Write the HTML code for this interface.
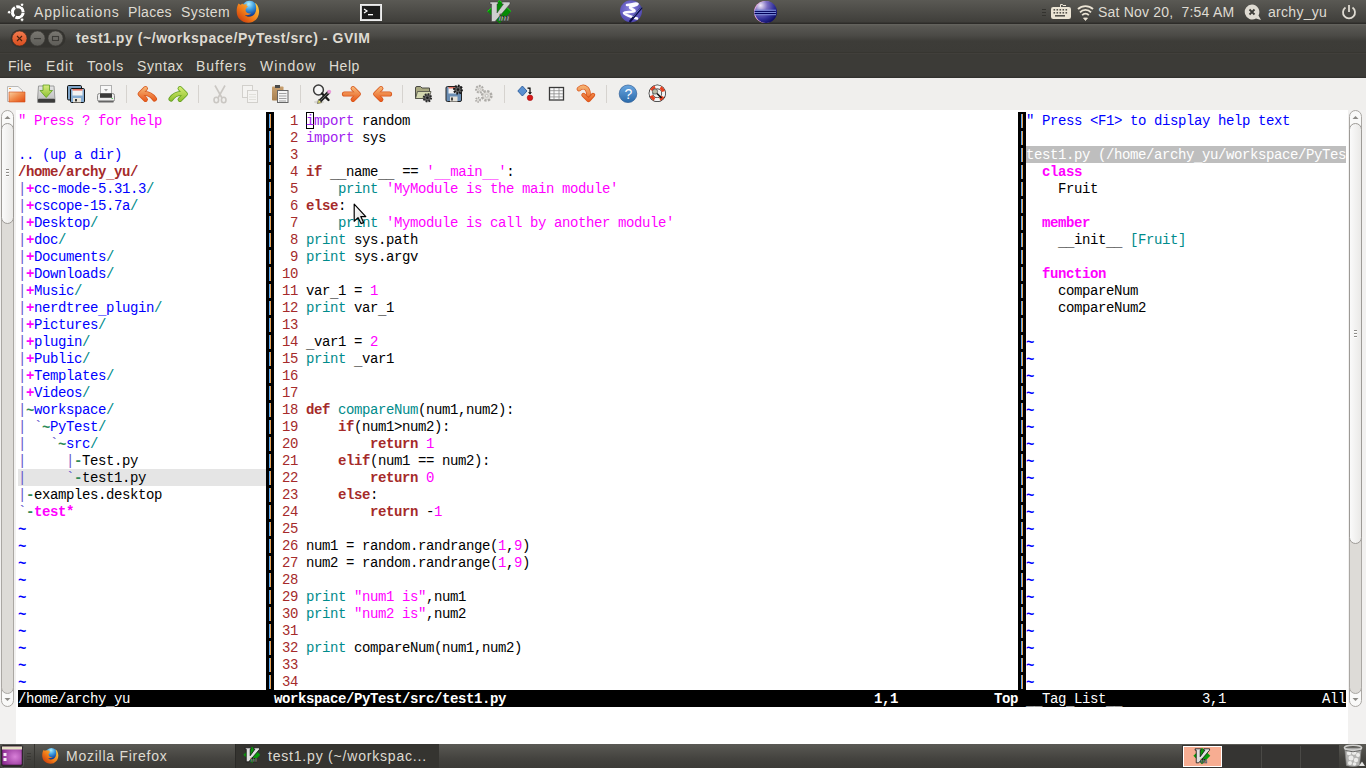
<!DOCTYPE html>
<html><head><meta charset="utf-8">
<style>
html,body{margin:0;padding:0;width:1366px;height:768px;overflow:hidden;background:#f2f1f0;}
body{position:relative;font-family:"Liberation Sans",sans-serif;}
.abs{position:absolute;}
/* top panel */
#toppanel{position:absolute;left:0;top:0;width:1366px;height:24px;background:linear-gradient(#5a5954 0px,#403f3b 21.5px,#2d2c29 23.5px);}
.pt{position:absolute;top:4px;font-size:14px;color:#dfdbd2;white-space:pre;line-height:17px;}
/* title bar */
#titlebar{position:absolute;left:0;top:24px;width:1366px;height:28px;background:linear-gradient(#666560 0px,#5a5954 2px,#4a4945 12px,#3d3c38 17px,#3c3b37);}
#title{position:absolute;left:76px;top:30px;font-size:14px;font-weight:bold;color:#dfdbd2;white-space:pre;letter-spacing:0.55px;line-height:17px;}
#menubar{position:absolute;left:0;top:52px;width:1366px;height:26px;background:linear-gradient(#373631 0px,#373631 1px,#413f3b 1px,#413f3b 2px,#3c3b37 2px,#3c3b37 24px,#2f2e2b 26px);}
.mt{position:absolute;top:58px;font-size:14px;color:#dfdbd2;white-space:pre;line-height:17px;}
#toolbar{position:absolute;left:0;top:78px;width:1366px;height:32px;background:#f0efed;}
.tsep{position:absolute;top:85px;width:1px;height:18px;background:#d6d3cf;}
/* editor */
#white{position:absolute;left:16px;top:110px;width:1332px;height:634px;background:#fff;}
.ln{position:absolute;font-family:"Liberation Mono",monospace;font-size:14px;letter-spacing:-0.4013px;line-height:17px;white-space:pre;height:17px;}
.mg{color:#ff00ff}.bl{color:#0000ff}.br{color:#a52a2a}.sb{color:#6a5acd}.dc{color:#008b8b}.sg{color:#2e8b57}.pp{color:#a020f0}.bk{color:#000}
.b{font-weight:bold}.us{position:relative;top:2px}.tl{position:relative;top:1px}.wh{color:#fff}
.hdr{color:#fff}
.sep{position:absolute;width:8px;height:17px;background:#000;}
.sep:after{content:"";position:absolute;left:3px;top:2px;width:2px;height:14px;background:linear-gradient(90deg,#5aa9f0 50%,#e8a050 50%);}
/* scrollbars */
.sbar{position:absolute;width:13px;border:1px solid #a8a5a0;border-radius:7px;background:#dcdad5;box-sizing:border-box;}
.sthumb{position:absolute;width:13px;border:1px solid #9a9893;border-radius:7px;background:linear-gradient(90deg,#fdfdfd,#ecebe9);box-sizing:border-box;}
/* bottom panel */
#botpanel{position:absolute;left:0;top:744px;width:1366px;height:24px;background:linear-gradient(#5a5954,#44433f 60%,#3c3b37);}
.bt{position:absolute;top:748px;font-size:14px;color:#dfdbd2;white-space:pre;line-height:17px;}
</style></head><body>

<div id="toppanel"></div>
<!-- ubuntu logo -->
<svg class="abs" style="left:4px;top:0px" width="26" height="24" viewBox="0 0 26 24">
 <circle cx="13.75" cy="12.2" r="5.4" fill="none" stroke="#fff" stroke-width="3.1" stroke-dasharray="10.01 1.3" stroke-dashoffset="10.66"/>
 <circle cx="5.15" cy="12.20" r="1.75" fill="#fff" stroke="#46453f" stroke-width="0.8"/>
 <circle cx="18.05" cy="4.75" r="1.75" fill="#fff" stroke="#46453f" stroke-width="0.8"/>
 <circle cx="18.05" cy="19.65" r="1.75" fill="#fff" stroke="#46453f" stroke-width="0.8"/>
</svg>
<div class="pt" style="left:34px;letter-spacing:0.85px">Applications</div>
<div class="pt" style="left:128px;letter-spacing:0.3px">Places</div>
<div class="pt" style="left:181px;letter-spacing:0.4px">System</div>
<!-- firefox -->
<svg class="abs" style="left:235px;top:0px" width="25" height="24" viewBox="0 0 25 24">
 <defs><radialGradient id="ffg" cx="0.45" cy="0.2" r="0.8"><stop offset="0" stop-color="#aef0ff"/><stop offset="0.45" stop-color="#3a9ae0"/><stop offset="1" stop-color="#0a2e88"/></radialGradient>
 <linearGradient id="ffo" x1="0" y1="1" x2="1" y2="0"><stop offset="0" stop-color="#c02a08"/><stop offset="0.45" stop-color="#f07a18"/><stop offset="1" stop-color="#ffd848"/></linearGradient></defs>
 <circle cx="14.5" cy="8.8" r="8" fill="url(#ffg)"/>
 <path d="M3.5 3.5 C1 8 1 15 4 18.5 C7.5 22.5 13 23.5 17.5 22 C22 20 24.5 15.5 24 10.5 C23.5 6 21.5 3.5 20 3 C22 7 21.5 13 18 15.5 C15 17.5 11.5 17 10 15 C13 15.5 15.5 14.5 16 13.5 C13 14 10.5 12.5 10.5 10 C10.5 8.5 12.5 7 13 6 C11.5 6.5 11 5 12 3.5 C10 5 8.5 4.5 7 3.5 C6.5 5 5 5 3.5 3.5 Z" fill="url(#ffo)"/>
</svg>
<!-- terminal -->
<svg class="abs" style="left:360px;top:4px" width="22" height="17" viewBox="0 0 22 17">
 <rect x="0.5" y="0.5" width="21" height="16" fill="#d8d8d8" stroke="#eee"/>
 <rect x="2" y="2" width="18" height="13" fill="#1c1c1c"/>
 <path d="M4 5 L7 7 L4 9" stroke="#fff" stroke-width="1.2" fill="none"/>
 <rect x="8" y="10" width="5" height="1.3" fill="#fff"/>
</svg>
<!-- vim -->
<svg class="abs" style="left:484px;top:0px" width="32" height="24" viewBox="0 0 32 24">
 <path d="M15.5 0.5 L27 11.5 L15.5 23.5 L3.5 11.5 Z" fill="#068a06"/>
 <path d="M3.5 11.5 L15.5 0.5 L27 11.5" fill="none" stroke="#10e010" stroke-width="1"/>
 <path d="M6 2 H14 V4 H13 V13 L19.5 4 H18 V2 H26 V4 L11 21.5 H7.5 V4 H6 Z" fill="#cfcfcf" stroke="#3a3a3a" stroke-width="0.5"/>
 <text x="14.5" y="21" font-family="Liberation Sans" font-size="9.5" font-style="italic" font-weight="bold" fill="#e4e4e4" stroke="#222" stroke-width="0.5" letter-spacing="-0.3">im</text>
</svg>
<!-- emacs -->
<svg class="abs" style="left:619px;top:0px" width="25" height="24" viewBox="0 0 25 24">
 <defs><radialGradient id="emg" cx="0.45" cy="0.4" r="0.6"><stop offset="0" stop-color="#8a82dc"/><stop offset="1" stop-color="#5048b0"/></radialGradient></defs>
 <ellipse cx="12" cy="22.5" rx="8" ry="1.5" fill="#2c2b28" opacity="0.6"/>
 <circle cx="12" cy="11.25" r="11" fill="url(#emg)"/>
 <path d="M8 5 C12 5 17 2.5 18.5 4 C18 6 11 6 11 7.5 C11 9 16 9.5 15.5 11 C14.5 12.5 5.5 11.5 5 13 C5 15 12 16.5 18 18.5" fill="none" stroke="#fbfaff" stroke-width="2.6" stroke-linecap="round" stroke-linejoin="round"/>
 <path d="M22.8 7.3 L10.6 22" stroke="#0c0c48" stroke-width="2.2"/>
 <path d="M22.5 6.8 L14 17" stroke="#8aa0f0" stroke-width="0.7"/>
</svg>
<!-- eclipse -->
<svg class="abs" style="left:753px;top:0px" width="24" height="24" viewBox="0 0 24 24">
 <defs><radialGradient id="ecg" cx="0.25" cy="0.2" r="0.9"><stop offset="0" stop-color="#f0e8f8"/><stop offset="0.35" stop-color="#7a6cc0"/><stop offset="0.7" stop-color="#30309a"/><stop offset="1" stop-color="#0a0a60"/></radialGradient></defs>
 <circle cx="12" cy="12" r="11" fill="#f0a8e0"/>
 <circle cx="13" cy="12" r="11" fill="url(#ecg)"/>
 <g fill="#000058"><rect x="1.5" y="10.8" width="21" height="1.3"/><rect x="1.5" y="13" width="21" height="1.3"/></g>
 <g fill="#7a8ad8"><rect x="1.5" y="9.7" width="21.5" height="1.1"/><rect x="1.5" y="11.9" width="21.5" height="1.1"/><rect x="1.5" y="14.1" width="21.5" height="1.1"/></g>
</svg>
<!-- right side indicators -->
<div class="abs" style="left:1042px;top:9px;width:4px;height:8px;background:repeating-linear-gradient(#34332f 0 1px,transparent 1px 3px);"></div>
<svg class="abs" style="left:1050px;top:3px" width="22" height="17" viewBox="0 0 22 17">
 <path d="M10.5 4 V1.5 H12.5 L13 2.5 H16" fill="none" stroke="#ece5d5" stroke-width="1"/>
 <rect x="1" y="4" width="20" height="12" rx="2.2" fill="#ece5d5"/>
 <g fill="#55534d"><rect x="3.5" y="6" width="1.6" height="1.6"/><rect x="6.5" y="6" width="1.6" height="1.6"/><rect x="9.5" y="6" width="1.6" height="1.6"/><rect x="12.5" y="6" width="1.6" height="1.6"/><rect x="15.5" y="6" width="1.6" height="1.6"/>
 <rect x="3.5" y="9" width="1.6" height="1.6"/><rect x="6.5" y="9" width="1.6" height="1.6"/><rect x="9.5" y="9" width="1.6" height="1.6"/><rect x="12.5" y="9" width="1.6" height="1.6"/><rect x="15.5" y="9" width="1.6" height="1.6"/>
 <rect x="5" y="12" width="10" height="1.6"/></g>
</svg>
<svg class="abs" style="left:1077px;top:4px" width="17" height="17" viewBox="0 0 17 17">
 <g fill="none" stroke="#ece5d5" stroke-width="1.8"><path d="M1 5 A11 11 0 0 1 16 5"/><path d="M3 8.3 A7.5 7.5 0 0 1 14 8.3"/><path d="M5.2 11.3 A4.2 4.2 0 0 1 11.8 11.3"/></g>
 <path d="M6.5 14 H10.5 L8.5 16.5 Z" fill="#ece5d5" stroke="#ece5d5" stroke-width="0.8" stroke-linejoin="round"/>
</svg>
<div class="pt" style="left:1098px;letter-spacing:0.2px">Sat Nov 20,  7:54 AM</div>
<svg class="abs" style="left:1244px;top:4px" width="18" height="17" viewBox="0 0 18 17">
 <path d="M8 0.5 A7.5 7.5 0 1 0 12 14.5 L17 16 L14.5 11.5 A7.5 7.5 0 0 0 8 0.5Z" fill="#dfdbd2"/>
 <path d="M5.5 5.5 L10.5 10.5 M10.5 5.5 L5.5 10.5" stroke="#3c3b37" stroke-width="1.8"/>
</svg>
<div class="pt" style="left:1268px;letter-spacing:0.3px">archy_yu</div>
<svg class="abs" style="left:1341px;top:4px" width="16" height="16" viewBox="0 0 16 16">
 <path d="M4.5 3.5 A6 6 0 1 0 11.5 3.5" fill="none" stroke="#dfdbd2" stroke-width="1.8"/>
 <path d="M8 1 V8" stroke="#dfdbd2" stroke-width="1.8"/>
</svg>

<!-- title bar -->
<div id="titlebar"></div>
<svg class="abs" style="left:10px;top:29px" width="56" height="19" viewBox="0 0 56 19">
 <rect x="0.5" y="0.5" width="55" height="18" rx="9" fill="#34332f"/>
 <defs><linearGradient id="clg" x1="0" y1="0" x2="0" y2="1"><stop offset="0" stop-color="#f47b4f"/><stop offset="1" stop-color="#d84d1e"/></linearGradient>
 <linearGradient id="mng" x1="0" y1="0" x2="0" y2="1"><stop offset="0" stop-color="#7a7872"/><stop offset="1" stop-color="#5d5c57"/></linearGradient></defs>
 <circle cx="9.5" cy="9.5" r="7.5" fill="url(#clg)" stroke="#3a2a20" stroke-width="0.6"/>
 <path d="M7 7 L12 12 M12 7 L7 12" stroke="#4a2410" stroke-width="1.1"/>
 <circle cx="27.5" cy="9.5" r="7.5" fill="url(#mng)" stroke="#3a3936" stroke-width="0.6"/>
 <rect x="24" y="9" width="7" height="1.2" fill="#3c3b37"/>
 <circle cx="45.5" cy="9.5" r="7.5" fill="url(#mng)" stroke="#3a3936" stroke-width="0.6"/>
 <rect x="42.5" y="7.5" width="6" height="4" fill="none" stroke="#3c3b37" stroke-width="1.1"/>
</svg>
<div id="title">test1.py (~/workspace/PyTest/src) - GVIM</div>

<!-- menu bar -->
<div id="menubar"></div>
<div class="mt" style="left:8px;letter-spacing:0.3px">File</div>
<div class="mt" style="left:46px;letter-spacing:0.9px">Edit</div>
<div class="mt" style="left:87px;letter-spacing:0.9px">Tools</div>
<div class="mt" style="left:137px;letter-spacing:0.6px">Syntax</div>
<div class="mt" style="left:196px;letter-spacing:1.0px">Buffers</div>
<div class="mt" style="left:260px;letter-spacing:1.1px">Window</div>
<div class="mt" style="left:329px;letter-spacing:0.5px">Help</div>

<!-- toolbar -->
<div id="toolbar"></div>
<svg class="abs" style="left:0;top:78px" width="700" height="32" viewBox="0 78 700 32">
 <defs>
  <linearGradient id="gOr" gradientUnits="userSpaceOnUse" x1="0" y1="87" x2="0" y2="101"><stop offset="0" stop-color="#f6b878"/><stop offset="1" stop-color="#e85a1c"/></linearGradient>
  <linearGradient id="gOr2" gradientUnits="userSpaceOnUse" x1="0" y1="85" x2="0" y2="102"><stop offset="0" stop-color="#f6b878"/><stop offset="1" stop-color="#e85a1c"/></linearGradient>
  <linearGradient id="gGr2" gradientUnits="userSpaceOnUse" x1="0" y1="87" x2="0" y2="101"><stop offset="0" stop-color="#d4ec70"/><stop offset="1" stop-color="#90c030"/></linearGradient>
  <linearGradient id="gFold" x1="0" y1="0" x2="1" y2="1"><stop offset="0" stop-color="#f8d0a0"/><stop offset="0.5" stop-color="#f08848"/><stop offset="1" stop-color="#e24a12"/></linearGradient>
  <linearGradient id="gGr" x1="0" y1="0" x2="0" y2="1"><stop offset="0" stop-color="#d8ec80"/><stop offset="1" stop-color="#8cc030"/></linearGradient>
  <linearGradient id="gDrv" x1="0" y1="0" x2="0" y2="1"><stop offset="0" stop-color="#e6e6e6"/><stop offset="1" stop-color="#b6b6b6"/></linearGradient>
  <linearGradient id="gBlue" x1="0" y1="0" x2="0" y2="1"><stop offset="0" stop-color="#6aa6e0"/><stop offset="1" stop-color="#2a6aaa"/></linearGradient>
  <linearGradient id="gClip" x1="0" y1="0" x2="0" y2="1"><stop offset="0" stop-color="#c8a070"/><stop offset="1" stop-color="#a88050"/></linearGradient>
 </defs>
 <!-- open -->
 <path d="M7.5 86.5 H18 L22.5 90.5 V101.5 H7.5 Z" fill="#f6f6f6" stroke="#b9b9b9"/>
 <rect x="9" y="88" width="2" height="1" fill="#f0a040"/>
 <path d="M9 92 H25 V102 H9 Z" fill="url(#gFold)" stroke="#d04a18" stroke-width="0.6"/>
 <!-- save (drive) -->
 <path d="M38.5 86 H54 L55 100 V102.5 H37.5 V100 Z" fill="url(#gDrv)" stroke="#9a9a9a"/>
 <rect x="38" y="98.8" width="17" height="3.6" rx="1" fill="#3c3c3c"/>
 <path d="M43 85 H49.5 V90.5 H52.5 L46.2 97.5 L40 90.5 H43 Z" fill="url(#gGr)" stroke="#5e9e22" stroke-width="0.8"/>
 <!-- save all floppy -->
 <rect x="67.5" y="85.5" width="14" height="14.5" rx="1.2" fill="#7fa4c8" stroke="#111"/>
 <rect x="70.5" y="88.5" width="14" height="14" rx="1.2" fill="#86acd2" stroke="#111"/>
 <rect x="72.5" y="89" width="10" height="6.5" fill="#f2f2f2"/>
 <rect x="72.5" y="89" width="10" height="1.6" fill="#e07060"/>
 <rect x="73" y="98" width="8" height="4.4" fill="#e8e4da"/>
 <rect x="75" y="99" width="2" height="2.4" fill="#333"/>
 <!-- print -->
 <rect x="100.5" y="85.5" width="11" height="8" fill="#f8f8f8" stroke="#b0b0b0"/>
 <path d="M104 89 H108 L106 91.5 Z" fill="#a0a0a0"/>
 <rect x="97.5" y="93.5" width="17" height="8" rx="2" fill="#ececec" stroke="#8a8a8a"/>
 <rect x="100" y="93.5" width="12" height="4.3" fill="#3a3a3a"/>
 <rect x="98.5" y="100.5" width="15" height="2" fill="#666"/>
 <rect x="111.5" y="98" width="1.5" height="1" fill="#6c6"/>
 <!-- undo -->
 <path d="M154.5 99 Q150.5 93.5 145 93.5 H142.5" fill="none" stroke="#d8561c" stroke-width="5" stroke-linecap="round"/>
 <path d="M145.5 88.5 L140 94 L145.5 99.5" fill="none" stroke="#d8561c" stroke-width="4.8" stroke-linecap="round" stroke-linejoin="round"/>
 <path d="M154.5 99 Q150.5 93.5 145 93.5 H142.5" fill="none" stroke="url(#gOr)" stroke-width="3.4" stroke-linecap="round"/>
 <path d="M145.5 88.5 L140 94 L145.5 99.5" fill="none" stroke="url(#gOr)" stroke-width="3.2" stroke-linecap="round" stroke-linejoin="round"/>
 <!-- redo -->
 <path d="M171 99 Q175 93.5 180.5 93.5 H183" fill="none" stroke="#62a020" stroke-width="5" stroke-linecap="round"/>
 <path d="M180 88.5 L185.5 94 L180 99.5" fill="none" stroke="#62a020" stroke-width="4.8" stroke-linecap="round" stroke-linejoin="round"/>
 <path d="M171 99 Q175 93.5 180.5 93.5 H183" fill="none" stroke="url(#gGr2)" stroke-width="3.4" stroke-linecap="round"/>
 <path d="M180 88.5 L185.5 94 L180 99.5" fill="none" stroke="url(#gGr2)" stroke-width="3.2" stroke-linecap="round" stroke-linejoin="round"/>
 <!-- cut (disabled) -->
 <g fill="none" stroke="#cac7c3" stroke-width="1.6">
  <path d="M215 85.5 L222 98"/><path d="M225 85.5 L218 98"/>
  <ellipse cx="216.3" cy="100" rx="2.3" ry="2.7"/><ellipse cx="223.7" cy="100" rx="2.3" ry="2.7"/>
 </g>
 <!-- copy (disabled) -->
 <rect x="242.5" y="85.5" width="10" height="12" fill="#f4f3f1" stroke="#d2d0cc"/>
 <rect x="247.5" y="90.5" width="10" height="12" fill="#f4f3f1" stroke="#d2d0cc"/>
 <g stroke="#dcdad6" stroke-width="0.8"><path d="M249 94.5 H256 M249 97 H256 M249 99.5 H256"/></g>
 <!-- paste -->
 <rect x="272" y="86.5" width="11.5" height="14" rx="0.8" fill="url(#gClip)"/>
 <rect x="275" y="85" width="5" height="3" fill="#4a4a4a"/>
 <rect x="277.5" y="90.5" width="10.5" height="12" fill="#f4f4f4" stroke="#666"/>
 <g stroke="#999" stroke-width="0.9"><path d="M279 93.5 H286.5 M279 96 H286.5 M279 98.5 H286.5 M279 101 H286"/></g>
 <!-- find/replace -->
 <ellipse cx="319" cy="102" rx="5" ry="1.5" fill="#d8d6d2"/>
 <circle cx="318.5" cy="90" r="4.9" fill="#f6f6f6" stroke="#3a3a3a" stroke-width="1.5"/>
 <path d="M322 93.5 L328.5 100" stroke="#1a1a1a" stroke-width="2.4" stroke-linecap="round"/>
 <path d="M320 101 L329 92" stroke="#222" stroke-width="3.6"/>
 <path d="M320.5 100.5 L328.5 92.5" stroke="#777" stroke-width="0.8"/>
 <path d="M317.5 103.5 L318.5 99.5 L321.5 102.5 Z" fill="#ece878" stroke="#222" stroke-width="0.5"/>
 <circle cx="329.2" cy="91.8" r="2" fill="#e89ad8"/>
 <!-- forward arrow -->
 <path d="M344.5 94 H357" stroke="#d8561c" stroke-width="5.2" stroke-linecap="round"/>
 <path d="M353 88.5 L358.5 94 L353 99.5" fill="none" stroke="#d8561c" stroke-width="4.8" stroke-linecap="round" stroke-linejoin="round"/>
 <path d="M344.5 94 H357" stroke="url(#gOr)" stroke-width="3.6" stroke-linecap="round"/>
 <path d="M353 88.5 L358.5 94 L353 99.5" fill="none" stroke="url(#gOr)" stroke-width="3.2" stroke-linecap="round" stroke-linejoin="round"/>
 <!-- back arrow -->
 <path d="M389.5 94 H377" stroke="#d8561c" stroke-width="5.2" stroke-linecap="round"/>
 <path d="M381 88.5 L375.5 94 L381 99.5" fill="none" stroke="#d8561c" stroke-width="4.8" stroke-linecap="round" stroke-linejoin="round"/>
 <path d="M389.5 94 H377" stroke="url(#gOr)" stroke-width="3.6" stroke-linecap="round"/>
 <path d="M381 88.5 L375.5 94 L381 99.5" fill="none" stroke="url(#gOr)" stroke-width="3.2" stroke-linecap="round" stroke-linejoin="round"/>
 <!-- folder gear -->
 <path d="M415.5 88 Q415.5 86.5 417 86.5 H420.5 L422 88 H429.5 V98.5 H415.5 Z" fill="#a8a880" stroke="#4a4a44"/>
 <path d="M415.5 98.5 L417.5 91.5 H431 L429 98.5 Z" fill="#d4d8b0" stroke="#4a4a44" stroke-width="0.8"/>
 <circle cx="427.4" cy="97.8" r="3.6" fill="#606060" stroke="#2a2a2a" stroke-width="2.2" stroke-dasharray="1.6 1.2"/>
 <circle cx="427.4" cy="97.8" r="1.3" fill="#1a1a1a"/>
 <!-- floppy gear -->
 <rect x="446" y="86.5" width="15.5" height="15" rx="1.5" fill="#6a8eb4" stroke="#222"/>
 <rect x="448.5" y="87" width="9" height="6.5" fill="#f2f2f2"/>
 <rect x="448.5" y="87" width="9" height="1.5" fill="#e07060"/>
 <rect x="450" y="96.5" width="7.5" height="5" fill="#e6e2d8"/>
 <rect x="451" y="97.5" width="2" height="3" fill="#444"/>
 <circle cx="458" cy="89.6" r="3.8" fill="#606060" stroke="#1a1a1a" stroke-width="2.4" stroke-dasharray="1.6 1.3"/>
 <circle cx="458" cy="89.6" r="1.3" fill="#1a1a1a"/>
 <!-- gears disabled -->
 <g fill="#dddbd7" stroke="#aeaca8">
  <circle cx="486.7" cy="95.8" r="4.6" stroke-width="2.6" stroke-dasharray="2.2 1.4"/>
  <circle cx="479.5" cy="89.2" r="3.3" stroke-width="2.2" stroke-dasharray="1.8 1.1"/>
  <circle cx="478" cy="99.8" r="2.1" stroke-width="1.8" stroke-dasharray="1.3 0.9"/>
 </g>
 <circle cx="486.7" cy="95.8" r="3.4" fill="#dedcd8"/>
 <circle cx="486.7" cy="95.8" r="1.4" fill="#f4f3f1" stroke="#b8b6b2" stroke-width="0.8"/>
 <circle cx="479.5" cy="89.2" r="2.3" fill="#dedcd8"/>
 <circle cx="479.5" cy="89.2" r="1" fill="#f4f3f1" stroke="#b8b6b2" stroke-width="0.6"/>
 <!-- diamond/red dot -->
 <path d="M522.4 86 L527 91 L522.4 96 L517.8 91 Z" fill="#5a90d0" stroke="#2a5a9a" stroke-width="0.9"/>
 <path d="M527.5 88.2 H530 V92.5" fill="none" stroke="#000" stroke-width="1.2"/>
 <path d="M528 92.3 H532 L530 94.5 Z" fill="#000"/>
 <circle cx="530" cy="97.8" r="2.8" fill="#d81818" stroke="#900" stroke-width="0.5"/>
 <!-- table -->
 <rect x="549.5" y="87.5" width="14" height="12.5" fill="#fafafa" stroke="#3a3a3a" stroke-width="1.3"/>
 <g stroke="#8a8a8a" stroke-width="0.8"><path d="M554 88 V99.5 M559 88 V99.5 M550 90.7 H563 M550 93.8 H563 M550 96.9 H563"/></g>
 <!-- curved down arrow -->
 <path d="M579 89 Q583 85.5 586.5 88.5 Q588.5 90.5 588.5 95" fill="none" stroke="#d8561c" stroke-width="4.8" stroke-linecap="round"/>
 <path d="M579 89 Q583 85.5 586.5 88.5 Q588.5 90.5 588.5 95" fill="none" stroke="url(#gOr2)" stroke-width="3.4" stroke-linecap="round"/>
 <path d="M583.5 95 L588.5 100 L593 95" fill="none" stroke="#d8561c" stroke-width="4.4" stroke-linecap="round" stroke-linejoin="round"/>
 <path d="M583.5 95 L588.5 100 L593 95" fill="none" stroke="url(#gOr2)" stroke-width="2.6" stroke-linecap="round" stroke-linejoin="round"/>
 <!-- help -->
 <circle cx="628" cy="93.8" r="8.8" fill="url(#gBlue)" stroke="#2f5f98" stroke-width="0.7"/>
 <text x="628.3" y="99.3" text-anchor="middle" font-family="Liberation Sans" font-size="14" fill="#fff">?</text>
 <!-- lifebuoy -->
 <circle cx="657.3" cy="93.3" r="6.4" fill="none" stroke="#222" stroke-width="4.6"/>
 <circle cx="657.3" cy="93.3" r="6.4" fill="none" stroke="#f4f4f4" stroke-width="3.2"/>
 <circle cx="657.3" cy="93.3" r="6.4" fill="none" stroke="#e84020" stroke-width="3.2" stroke-dasharray="5 5" stroke-dashoffset="2.5" transform="rotate(45 657.3 93.3)"/>
 <circle cx="655" cy="91.5" r="2.6" fill="#b8bca8" stroke="#555" stroke-width="0.8"/>
 <path d="M657 93.5 L661.5 98" stroke="#111" stroke-width="1.6"/>
</svg>

<div class="tsep" style="left:126px"></div>
<div class="tsep" style="left:198px"></div>
<div class="tsep" style="left:300px"></div>
<div class="tsep" style="left:402px"></div>
<div class="tsep" style="left:504px"></div>
<div class="tsep" style="left:606px"></div>

<!-- editor -->
<div id="white"></div>
<!-- left scrollbar -->
<svg class="abs" style="left:0px;top:108px" width="16" height="602" viewBox="0 108 16 602">
 <defs><linearGradient id="th0" x1="0" y1="0" x2="1" y2="0"><stop offset="0" stop-color="#fbfbfb"/><stop offset="1" stop-color="#e9e8e6"/></linearGradient></defs>
 <rect x="1.5" y="110.5" width="12" height="596" rx="6" fill="#f9f9f8" stroke="#aaa7a3"/>
 <rect x="1.5" y="126" width="12" height="567.5" rx="6" fill="#dddbd7" stroke="#aaa7a3"/>
 <rect x="1.5" y="123.5" width="12" height="100" rx="6" fill="url(#th0)" stroke="#9d9a96"/>
 <path d="M6 170.5 H9 M6 173.5 H9 M6 176.5 H9" stroke="#fff" stroke-width="1"/><path d="M6 169.5 H9 M6 172.5 H9 M6 175.5 H9" stroke="#8e8c88" stroke-width="1"/>
 <path d="M4.5 119 H10.5 L7.5 116 Z" fill="#8c8a86"/>
 <path d="M4.5 698 H10.5 L7.5 701 Z" fill="#8c8a86"/>
</svg>
<!-- right scrollbar -->
<svg class="abs" style="left:1348px;top:108px" width="16" height="602" viewBox="1348 108 16 602">
 <defs><linearGradient id="th1348" x1="0" y1="0" x2="1" y2="0"><stop offset="0" stop-color="#fbfbfb"/><stop offset="1" stop-color="#e9e8e6"/></linearGradient></defs>
 <rect x="1349.5" y="110.5" width="12" height="596" rx="6" fill="#f9f9f8" stroke="#aaa7a3"/>
 <rect x="1349.5" y="126" width="12" height="567.5" rx="6" fill="#dddbd7" stroke="#aaa7a3"/>
 <rect x="1349.5" y="123.5" width="12" height="420" rx="6" fill="url(#th1348)" stroke="#9d9a96"/>
 <path d="M1354 331.5 H1357 M1354 334.5 H1357 M1354 337.5 H1357" stroke="#fff" stroke-width="1"/><path d="M1354 330.5 H1357 M1354 333.5 H1357 M1354 336.5 H1357" stroke="#8e8c88" stroke-width="1"/>
 <path d="M1352.5 119 H1358.5 L1355.5 116 Z" fill="#8c8a86"/>
 <path d="M1352.5 698 H1358.5 L1355.5 701 Z" fill="#8c8a86"/>
</svg>
<div class="abs" style="left:1026px;top:146px;width:320px;height:17px;background:#bebebe"></div>
<!-- cursorline in nerdtree -->
<div class="abs" style="left:18px;top:469px;width:248px;height:17px;background:#e5e5e5"></div>
<!-- cursor -->
<div class="abs" style="left:306px;top:112px;width:8px;height:17px;border:1px solid #000;box-sizing:border-box"></div>
<div class="sep" style="left:266px;top:112px"></div>
<div class="sep" style="left:1018px;top:112px"></div>
<div class="sep" style="left:266px;top:129px"></div>
<div class="sep" style="left:1018px;top:129px"></div>
<div class="sep" style="left:266px;top:146px"></div>
<div class="sep" style="left:1018px;top:146px"></div>
<div class="sep" style="left:266px;top:163px"></div>
<div class="sep" style="left:1018px;top:163px"></div>
<div class="sep" style="left:266px;top:180px"></div>
<div class="sep" style="left:1018px;top:180px"></div>
<div class="sep" style="left:266px;top:197px"></div>
<div class="sep" style="left:1018px;top:197px"></div>
<div class="sep" style="left:266px;top:214px"></div>
<div class="sep" style="left:1018px;top:214px"></div>
<div class="sep" style="left:266px;top:231px"></div>
<div class="sep" style="left:1018px;top:231px"></div>
<div class="sep" style="left:266px;top:248px"></div>
<div class="sep" style="left:1018px;top:248px"></div>
<div class="sep" style="left:266px;top:265px"></div>
<div class="sep" style="left:1018px;top:265px"></div>
<div class="sep" style="left:266px;top:282px"></div>
<div class="sep" style="left:1018px;top:282px"></div>
<div class="sep" style="left:266px;top:299px"></div>
<div class="sep" style="left:1018px;top:299px"></div>
<div class="sep" style="left:266px;top:316px"></div>
<div class="sep" style="left:1018px;top:316px"></div>
<div class="sep" style="left:266px;top:333px"></div>
<div class="sep" style="left:1018px;top:333px"></div>
<div class="sep" style="left:266px;top:350px"></div>
<div class="sep" style="left:1018px;top:350px"></div>
<div class="sep" style="left:266px;top:367px"></div>
<div class="sep" style="left:1018px;top:367px"></div>
<div class="sep" style="left:266px;top:384px"></div>
<div class="sep" style="left:1018px;top:384px"></div>
<div class="sep" style="left:266px;top:401px"></div>
<div class="sep" style="left:1018px;top:401px"></div>
<div class="sep" style="left:266px;top:418px"></div>
<div class="sep" style="left:1018px;top:418px"></div>
<div class="sep" style="left:266px;top:435px"></div>
<div class="sep" style="left:1018px;top:435px"></div>
<div class="sep" style="left:266px;top:452px"></div>
<div class="sep" style="left:1018px;top:452px"></div>
<div class="sep" style="left:266px;top:469px"></div>
<div class="sep" style="left:1018px;top:469px"></div>
<div class="sep" style="left:266px;top:486px"></div>
<div class="sep" style="left:1018px;top:486px"></div>
<div class="sep" style="left:266px;top:503px"></div>
<div class="sep" style="left:1018px;top:503px"></div>
<div class="sep" style="left:266px;top:520px"></div>
<div class="sep" style="left:1018px;top:520px"></div>
<div class="sep" style="left:266px;top:537px"></div>
<div class="sep" style="left:1018px;top:537px"></div>
<div class="sep" style="left:266px;top:554px"></div>
<div class="sep" style="left:1018px;top:554px"></div>
<div class="sep" style="left:266px;top:571px"></div>
<div class="sep" style="left:1018px;top:571px"></div>
<div class="sep" style="left:266px;top:588px"></div>
<div class="sep" style="left:1018px;top:588px"></div>
<div class="sep" style="left:266px;top:605px"></div>
<div class="sep" style="left:1018px;top:605px"></div>
<div class="sep" style="left:266px;top:622px"></div>
<div class="sep" style="left:1018px;top:622px"></div>
<div class="sep" style="left:266px;top:639px"></div>
<div class="sep" style="left:1018px;top:639px"></div>
<div class="sep" style="left:266px;top:656px"></div>
<div class="sep" style="left:1018px;top:656px"></div>
<div class="sep" style="left:266px;top:673px"></div>
<div class="sep" style="left:1018px;top:673px"></div>
<div class="ln" style="left:18px;top:113px"><span class="mg">" Press ? for help</span></div>
<div class="ln" style="left:18px;top:147px"><span class="bl">.. (up a dir)</span></div>
<div class="ln" style="left:18px;top:164px"><span class="br b">/home/archy<span class="us">_</span>yu/</span></div>
<div class="ln" style="left:18px;top:181px"><span class="sb">|</span><span class="mg b">+</span><span class="bl">cc-mode-5.31.3</span><span class="dc">/</span></div>
<div class="ln" style="left:18px;top:198px"><span class="sb">|</span><span class="mg b">+</span><span class="bl">cscope-15.7a</span><span class="dc">/</span></div>
<div class="ln" style="left:18px;top:215px"><span class="sb">|</span><span class="mg b">+</span><span class="bl">Desktop</span><span class="dc">/</span></div>
<div class="ln" style="left:18px;top:232px"><span class="sb">|</span><span class="mg b">+</span><span class="bl">doc</span><span class="dc">/</span></div>
<div class="ln" style="left:18px;top:249px"><span class="sb">|</span><span class="mg b">+</span><span class="bl">Documents</span><span class="dc">/</span></div>
<div class="ln" style="left:18px;top:266px"><span class="sb">|</span><span class="mg b">+</span><span class="bl">Downloads</span><span class="dc">/</span></div>
<div class="ln" style="left:18px;top:283px"><span class="sb">|</span><span class="mg b">+</span><span class="bl">Music</span><span class="dc">/</span></div>
<div class="ln" style="left:18px;top:300px"><span class="sb">|</span><span class="mg b">+</span><span class="bl">nerdtree<span class="us">_</span>plugin</span><span class="dc">/</span></div>
<div class="ln" style="left:18px;top:317px"><span class="sb">|</span><span class="mg b">+</span><span class="bl">Pictures</span><span class="dc">/</span></div>
<div class="ln" style="left:18px;top:334px"><span class="sb">|</span><span class="mg b">+</span><span class="bl">plugin</span><span class="dc">/</span></div>
<div class="ln" style="left:18px;top:351px"><span class="sb">|</span><span class="mg b">+</span><span class="bl">Public</span><span class="dc">/</span></div>
<div class="ln" style="left:18px;top:368px"><span class="sb">|</span><span class="mg b">+</span><span class="bl">Templates</span><span class="dc">/</span></div>
<div class="ln" style="left:18px;top:385px"><span class="sb">|</span><span class="mg b">+</span><span class="bl">Videos</span><span class="dc">/</span></div>
<div class="ln" style="left:18px;top:402px"><span class="sb">|</span><span class="sg b"><span class="tl">~</span></span><span class="bl">workspace</span><span class="dc">/</span></div>
<div class="ln" style="left:18px;top:419px"><span class="sb">| `</span><span class="sg b"><span class="tl">~</span></span><span class="bl">PyTest</span><span class="dc">/</span></div>
<div class="ln" style="left:18px;top:436px"><span class="sb">|   `</span><span class="sg b"><span class="tl">~</span></span><span class="bl">src</span><span class="dc">/</span></div>
<div class="ln" style="left:18px;top:453px"><span class="sb">|     |</span><span class="sg b">-</span><span class="bk">Test.py</span></div>
<div class="ln" style="left:18px;top:470px"><span class="sb">|     `</span><span class="sg b">-</span><span class="bk">test1.py</span></div>
<div class="ln" style="left:18px;top:487px"><span class="sb">|</span><span class="sg b">-</span><span class="bk">examples.desktop</span></div>
<div class="ln" style="left:18px;top:504px"><span class="sb">`</span><span class="sg b">-</span><span class="mg b">test*</span></div>
<div class="ln" style="left:18px;top:521px"><span class="bl b"><span class="tl">~</span></span></div>
<div class="ln" style="left:18px;top:538px"><span class="bl b"><span class="tl">~</span></span></div>
<div class="ln" style="left:18px;top:555px"><span class="bl b"><span class="tl">~</span></span></div>
<div class="ln" style="left:18px;top:572px"><span class="bl b"><span class="tl">~</span></span></div>
<div class="ln" style="left:18px;top:589px"><span class="bl b"><span class="tl">~</span></span></div>
<div class="ln" style="left:18px;top:606px"><span class="bl b"><span class="tl">~</span></span></div>
<div class="ln" style="left:18px;top:623px"><span class="bl b"><span class="tl">~</span></span></div>
<div class="ln" style="left:18px;top:640px"><span class="bl b"><span class="tl">~</span></span></div>
<div class="ln" style="left:18px;top:657px"><span class="bl b"><span class="tl">~</span></span></div>
<div class="ln" style="left:18px;top:674px"><span class="bl b"><span class="tl">~</span></span></div>
<div class="ln" style="left:274px;top:113px"><span class="br">  1 </span><span class="pp">import</span><span class="bk"> random</span></div>
<div class="ln" style="left:274px;top:130px"><span class="br">  2 </span><span class="pp">import</span><span class="bk"> sys</span></div>
<div class="ln" style="left:274px;top:147px"><span class="br">  3 </span></div>
<div class="ln" style="left:274px;top:164px"><span class="br">  4 </span><span class="br b">if</span><span class="bk"> <span class="us">_</span><span class="us">_</span>name<span class="us">_</span><span class="us">_</span> == </span><span class="mg">'<span class="us">_</span><span class="us">_</span>main<span class="us">_</span><span class="us">_</span>'</span><span class="bk">:</span></div>
<div class="ln" style="left:274px;top:181px"><span class="br">  5 </span><span class="bk">    </span><span class="dc">print</span><span class="bk"> </span><span class="mg">'MyModule is the main module'</span></div>
<div class="ln" style="left:274px;top:198px"><span class="br">  6 </span><span class="br b">else</span><span class="bk">:</span></div>
<div class="ln" style="left:274px;top:215px"><span class="br">  7 </span><span class="bk">    </span><span class="dc">print</span><span class="bk"> </span><span class="mg">'Mymodule is call by another module'</span></div>
<div class="ln" style="left:274px;top:232px"><span class="br">  8 </span><span class="dc">print</span><span class="bk"> sys.path</span></div>
<div class="ln" style="left:274px;top:249px"><span class="br">  9 </span><span class="dc">print</span><span class="bk"> sys.argv</span></div>
<div class="ln" style="left:274px;top:266px"><span class="br"> 10 </span></div>
<div class="ln" style="left:274px;top:283px"><span class="br"> 11 </span><span class="bk">var<span class="us">_</span>1 = </span><span class="mg">1</span></div>
<div class="ln" style="left:274px;top:300px"><span class="br"> 12 </span><span class="dc">print</span><span class="bk"> var<span class="us">_</span>1</span></div>
<div class="ln" style="left:274px;top:317px"><span class="br"> 13 </span></div>
<div class="ln" style="left:274px;top:334px"><span class="br"> 14 </span><span class="bk"><span class="us">_</span>var1 = </span><span class="mg">2</span></div>
<div class="ln" style="left:274px;top:351px"><span class="br"> 15 </span><span class="dc">print</span><span class="bk"> <span class="us">_</span>var1</span></div>
<div class="ln" style="left:274px;top:368px"><span class="br"> 16 </span></div>
<div class="ln" style="left:274px;top:385px"><span class="br"> 17 </span></div>
<div class="ln" style="left:274px;top:402px"><span class="br"> 18 </span><span class="br b">def</span><span class="bk"> </span><span class="dc">compareNum</span><span class="bk">(num1,num2):</span></div>
<div class="ln" style="left:274px;top:419px"><span class="br"> 19 </span><span class="bk">    </span><span class="br b">if</span><span class="bk">(num1&gt;num2):</span></div>
<div class="ln" style="left:274px;top:436px"><span class="br"> 20 </span><span class="bk">        </span><span class="br b">return</span><span class="bk"> </span><span class="mg">1</span></div>
<div class="ln" style="left:274px;top:453px"><span class="br"> 21 </span><span class="bk">    </span><span class="br b">elif</span><span class="bk">(num1 == num2):</span></div>
<div class="ln" style="left:274px;top:470px"><span class="br"> 22 </span><span class="bk">        </span><span class="br b">return</span><span class="bk"> </span><span class="mg">0</span></div>
<div class="ln" style="left:274px;top:487px"><span class="br"> 23 </span><span class="bk">    </span><span class="br b">else</span><span class="bk">:</span></div>
<div class="ln" style="left:274px;top:504px"><span class="br"> 24 </span><span class="bk">        </span><span class="br b">return</span><span class="bk"> -</span><span class="mg">1</span></div>
<div class="ln" style="left:274px;top:521px"><span class="br"> 25 </span></div>
<div class="ln" style="left:274px;top:538px"><span class="br"> 26 </span><span class="bk">num1 = random.randrange(</span><span class="mg">1</span><span class="bk">,</span><span class="mg">9</span><span class="bk">)</span></div>
<div class="ln" style="left:274px;top:555px"><span class="br"> 27 </span><span class="bk">num2 = random.randrange(</span><span class="mg">1</span><span class="bk">,</span><span class="mg">9</span><span class="bk">)</span></div>
<div class="ln" style="left:274px;top:572px"><span class="br"> 28 </span></div>
<div class="ln" style="left:274px;top:589px"><span class="br"> 29 </span><span class="dc">print</span><span class="bk"> </span><span class="mg">"num1 is"</span><span class="bk">,num1</span></div>
<div class="ln" style="left:274px;top:606px"><span class="br"> 30 </span><span class="dc">print</span><span class="bk"> </span><span class="mg">"num2 is"</span><span class="bk">,num2</span></div>
<div class="ln" style="left:274px;top:623px"><span class="br"> 31 </span></div>
<div class="ln" style="left:274px;top:640px"><span class="br"> 32 </span><span class="dc">print</span><span class="bk"> compareNum(num1,num2)</span></div>
<div class="ln" style="left:274px;top:657px"><span class="br"> 33 </span></div>
<div class="ln" style="left:274px;top:674px"><span class="br"> 34 </span></div>
<div class="ln" style="left:1026px;top:113px"><span class="bl">" Press &lt;F1&gt; to display help text</span></div>
<div class="ln" style="left:1026px;top:147px"><span class="hdr">test1.py (/home/archy<span class="us">_</span>yu/workspace/PyTes</span></div>
<div class="ln" style="left:1026px;top:164px"><span class="bk">  </span><span class="mg b">class</span></div>
<div class="ln" style="left:1026px;top:181px"><span class="bk">    Fruit</span></div>
<div class="ln" style="left:1026px;top:215px"><span class="bk">  </span><span class="mg b">member</span></div>
<div class="ln" style="left:1026px;top:232px"><span class="bk">    <span class="us">_</span><span class="us">_</span>init<span class="us">_</span><span class="us">_</span> </span><span class="dc">[Fruit]</span></div>
<div class="ln" style="left:1026px;top:266px"><span class="bk">  </span><span class="mg b">function</span></div>
<div class="ln" style="left:1026px;top:283px"><span class="bk">    compareNum</span></div>
<div class="ln" style="left:1026px;top:300px"><span class="bk">    compareNum2</span></div>
<div class="ln" style="left:1026px;top:334px"><span class="bl b"><span class="tl">~</span></span></div>
<div class="ln" style="left:1026px;top:351px"><span class="bl b"><span class="tl">~</span></span></div>
<div class="ln" style="left:1026px;top:368px"><span class="bl b"><span class="tl">~</span></span></div>
<div class="ln" style="left:1026px;top:385px"><span class="bl b"><span class="tl">~</span></span></div>
<div class="ln" style="left:1026px;top:402px"><span class="bl b"><span class="tl">~</span></span></div>
<div class="ln" style="left:1026px;top:419px"><span class="bl b"><span class="tl">~</span></span></div>
<div class="ln" style="left:1026px;top:436px"><span class="bl b"><span class="tl">~</span></span></div>
<div class="ln" style="left:1026px;top:453px"><span class="bl b"><span class="tl">~</span></span></div>
<div class="ln" style="left:1026px;top:470px"><span class="bl b"><span class="tl">~</span></span></div>
<div class="ln" style="left:1026px;top:487px"><span class="bl b"><span class="tl">~</span></span></div>
<div class="ln" style="left:1026px;top:504px"><span class="bl b"><span class="tl">~</span></span></div>
<div class="ln" style="left:1026px;top:521px"><span class="bl b"><span class="tl">~</span></span></div>
<div class="ln" style="left:1026px;top:538px"><span class="bl b"><span class="tl">~</span></span></div>
<div class="ln" style="left:1026px;top:555px"><span class="bl b"><span class="tl">~</span></span></div>
<div class="ln" style="left:1026px;top:572px"><span class="bl b"><span class="tl">~</span></span></div>
<div class="ln" style="left:1026px;top:589px"><span class="bl b"><span class="tl">~</span></span></div>
<div class="ln" style="left:1026px;top:606px"><span class="bl b"><span class="tl">~</span></span></div>
<div class="ln" style="left:1026px;top:623px"><span class="bl b"><span class="tl">~</span></span></div>
<div class="ln" style="left:1026px;top:640px"><span class="bl b"><span class="tl">~</span></span></div>
<div class="ln" style="left:1026px;top:657px"><span class="bl b"><span class="tl">~</span></span></div>
<div class="ln" style="left:1026px;top:674px"><span class="bl b"><span class="tl">~</span></span></div>
<div class="abs" style="left:18px;top:690px;width:1328px;height:17px;background:#000"></div>
<div class="ln" style="left:18px;top:691px"><span class="wh">/home/archy<span class="us">_</span>yu</span></div>
<div class="ln" style="left:274px;top:691px"><span class="wh b">workspace/PyTest/src/test1.py</span></div>
<div class="ln" style="left:874px;top:691px"><span class="wh b">1,1</span></div>
<div class="ln" style="left:994px;top:691px"><span class="wh b">Top</span></div>
<div class="ln" style="left:1026px;top:691px"><span class="wh"><span class="us">_</span><span class="us">_</span>Tag<span class="us">_</span>List<span class="us">_</span><span class="us">_</span></span></div>
<div class="ln" style="left:1202px;top:691px"><span class="wh">3,1</span></div>
<div class="ln" style="left:1322px;top:691px"><span class="wh">All</span></div>

<!-- mouse pointer -->
<svg class="abs" style="left:353px;top:203px" width="14" height="22" viewBox="0 0 14 22">
 <defs><linearGradient id="mpg" x1="0" y1="0" x2="1" y2="1"><stop offset="0" stop-color="#fff"/><stop offset="1" stop-color="#d8d8d8"/></linearGradient></defs>
 <path d="M1.2 1.2 L1.2 18.2 L5 14.6 L8 20.6 L10.6 19.6 L7.8 13.6 L12.8 13.6 Z" fill="url(#mpg)" stroke="#000" stroke-width="1.2" stroke-linejoin="round"/>
</svg>

<!-- bottom panel -->
<div id="botpanel"></div>
<!-- show desktop -->
<svg class="abs" style="left:0;top:744px" width="24" height="24" viewBox="0 0 24 24">
 <defs><radialGradient id="sdg" cx="0.65" cy="0.55" r="0.7"><stop offset="0" stop-color="#d880d8"/><stop offset="1" stop-color="#8a2a90"/></radialGradient></defs>
 <rect x="0.5" y="0.5" width="23" height="23" rx="3" fill="#2c2b28" stroke="#555"/>
 <rect x="2" y="2.5" width="20" height="18.5" rx="1.5" fill="url(#sdg)" stroke="#3a1a3a" stroke-width="0.6"/>
 <rect x="2" y="2.5" width="20" height="3" fill="#e6e2c8"/>
 <rect x="3.5" y="9" width="3" height="3" fill="#f6eaf6"/>
 <rect x="3.5" y="14" width="3" height="3" fill="#f6eaf6"/>
</svg>
<div class="abs" style="left:27px;top:753px;width:4px;height:8px;background:repeating-linear-gradient(#3a3935 0 1px,transparent 1px 3px)"></div>
<div class="abs" style="left:34px;top:744px;width:1px;height:24px;background:#363531"></div>
<!-- firefox icon -->
<svg class="abs" style="left:41px;top:747px" width="18" height="18" viewBox="0 0 25 24">
 <circle cx="14.5" cy="8.8" r="8" fill="url(#ffg)"/>
 <path d="M3.5 3.5 C1 8 1 15 4 18.5 C7.5 22.5 13 23.5 17.5 22 C22 20 24.5 15.5 24 10.5 C23.5 6 21.5 3.5 20 3 C22 7 21.5 13 18 15.5 C15 17.5 11.5 17 10 15 C13 15.5 15.5 14.5 16 13.5 C13 14 10.5 12.5 10.5 10 C10.5 8.5 12.5 7 13 6 C11.5 6.5 11 5 12 3.5 C10 5 8.5 4.5 7 3.5 C6.5 5 5 5 3.5 3.5 Z" fill="url(#ffo)"/>
</svg>
<div class="bt" style="left:66px;letter-spacing:0.75px">Mozilla Firefox</div>
<div class="abs" style="left:235px;top:744px;width:204px;height:24px;background:#353430;border-left:1px solid #2b2a27;box-sizing:border-box"></div>
<!-- vim icon small -->
<svg class="abs" style="left:243px;top:746px" width="18" height="18" viewBox="3 0 25 24">
 <path d="M15.5 0.5 L27 11.5 L15.5 23.5 L3.5 11.5 Z" fill="#0a9a0a"/>
 <path d="M6 2 H14 V4 H13 V13 L19.5 4 H18 V2 H26 V4 L11 21.5 H7.5 V4 H6 Z" fill="#e0e0e0" stroke="#111" stroke-width="1.1"/>
 <text x="13.5" y="22" font-family="Liberation Sans" font-size="10" font-weight="bold" fill="#f0f0f0" stroke="#111" stroke-width="0.7" letter-spacing="-0.5">m</text>
</svg>
<div class="bt" style="left:268px;letter-spacing:0.8px">test1.py (~/workspac...</div>
<!-- workspace switcher -->
<div class="abs" style="left:1182px;top:745px;width:157px;height:23px;background:#353432"></div>
<div class="abs" style="left:1183px;top:746px;width:39px;height:21px;background:#f7ad92;border:1px solid #fff;box-sizing:border-box"></div>
<svg class="abs" style="left:1193px;top:747px" width="18" height="18" viewBox="3 0 25 24">
 <path d="M15.5 0.5 L27 11.5 L15.5 23.5 L3.5 11.5 Z" fill="#0a9a0a"/>
 <path d="M6 2 H14 V4 H13 V13 L19.5 4 H18 V2 H26 V4 L11 21.5 H7.5 V4 H6 Z" fill="#e0e0e0" stroke="#111" stroke-width="1.1"/>
 <text x="13.5" y="22" font-family="Liberation Sans" font-size="10" font-weight="bold" fill="#f0f0f0" stroke="#111" stroke-width="0.7" letter-spacing="-0.5">m</text>
</svg>
<div class="abs" style="left:1261px;top:746px;width:1px;height:22px;background:#4a4946"></div>
<div class="abs" style="left:1300px;top:746px;width:1px;height:22px;background:#4a4946"></div>
<!-- trash -->
<svg class="abs" style="left:1343px;top:744px" width="23" height="24" viewBox="0 0 23 24">
 <path d="M1.8 4 L3.5 21.5 Q10 23.5 16.5 21.5 L18.2 4 Z" fill="#b4b4b2" stroke="#8a8a88" stroke-width="0.7"/>
 <g fill="#ececea"><circle cx="6" cy="9" r="2.2"/><circle cx="11" cy="8.5" r="2.4"/><circle cx="15" cy="11" r="2"/><circle cx="8" cy="14" r="2.5"/><circle cx="13" cy="16" r="2.2"/><circle cx="7" cy="19" r="2"/><circle cx="11.5" cy="20" r="1.8"/></g>
 <ellipse cx="10" cy="3.8" rx="8.6" ry="2.6" fill="none" stroke="#cfcfcd" stroke-width="1.6"/>
 <path d="M2.5 6.5 Q10 9 17.5 6.5" fill="none" stroke="#5a5a58" stroke-width="0.9"/>
 <path d="M16 22 L19 17.5 L22 22 Z" fill="#e6e6e4"/>
</svg>
</body></html>
